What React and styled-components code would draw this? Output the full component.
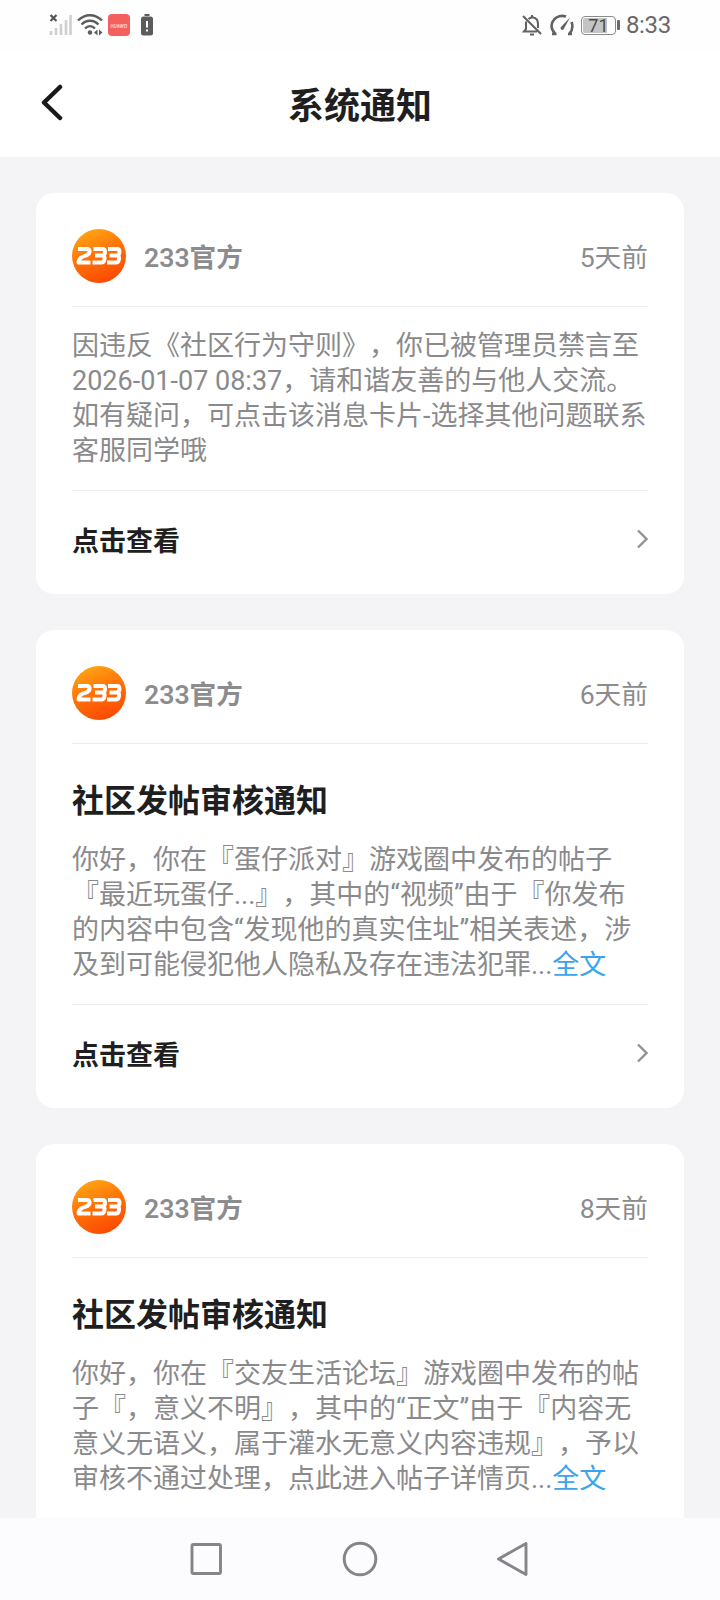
import React from 'react';
import styled, { createGlobalStyle } from 'styled-components';

const GlobalStyle = createGlobalStyle`
  * { box-sizing: border-box; }
  body {
    margin: 0;
    background: #f4f4f7;
    font-family: Roboto, "Noto Sans CJK SC", sans-serif;
    text-spacing-trim: space-all;
  }
`;

const Screen = styled.div`
  width: 720px;
  height: 1600px;
  display: flex;
  flex-direction: column;
  overflow: hidden;
  background: #f4f4f7;
`;

const StatusBar = styled.div`
  height: 50px;
  flex: none;
  display: flex;
  justify-content: space-between;
  align-items: center;
  padding: 0 49px 0 48px;
  background: #fefefe;
`;

const StatusGroup = styled.div`
  display: flex;
  align-items: center;
  height: 50px;
`;

const Clock = styled.span`
  margin-left: 6px;
  font-size: 24px;
  line-height: 50px;
  letter-spacing: -0.3px;
  color: #686868;
`;

const BatteryShell = styled.div`
  width: 35px;
  height: 19px;
  margin-left: 7px;
  border: 1.5px solid #8a8a8a;
  border-radius: 4px;
  padding: 1px;
  background: linear-gradient(90deg, #c4c4c4 0 24px, #fff 24px) content-box;
  color: #4c4c4c;
  font-size: 18px;
  line-height: 15px;
  text-align: center;
`;

const BatteryTip = styled.span`
  width: 3px;
  height: 10px;
  margin-left: 1px;
  border-radius: 1px;
  background: #6b6b6b;
`;

const AppBadge = styled.div`
  width: 22px;
  height: 22px;
  margin-left: 5px;
  border-radius: 4px;
  background: #f4605d;
  color: #ffd0c8;
  font-size: 4.5px;
  font-weight: 700;
  line-height: 25px;
  text-align: center;
`;

const TitleBar = styled.header`
  height: 107px;
  flex: none;
  display: grid;
  grid-template-columns: 120px 1fr 120px;
  align-items: center;
  background: #fff;
`;

const BackButton = styled.button`
  width: 24px;
  height: 38px;
  margin: 0 0 4px 40px;
  padding: 0;
  border: 0;
  background: none;
`;

const PageTitle = styled.h1`
  margin: 6px 0 0;
  text-align: center;
  font-size: 36px;
  line-height: 48px;
  font-weight: 700;
  color: #1f1f22;
`;

const Feed = styled.main`
  flex: 1;
  min-height: 0;
  overflow: hidden;
  display: flex;
  flex-direction: column;
  gap: 36px;
  padding: 36px 36px 0;
`;

const Card = styled.article`
  flex: none;
  padding: 0 36px;
  border-radius: ${(p) => (p.$open ? '18px 18px 0 0' : '18px')};
  background: #fff;
`;

const CardHeader = styled.div`
  height: 114px;
  display: flex;
  align-items: center;
  padding-top: 12px;
  border-bottom: 1px solid #ececee;
`;

const Sender = styled.span`
  flex: 1;
  margin: 4px 0 0 18px;
  font-size: 26.6px;
  line-height: 36px;
  font-weight: 600;
  color: #8c8c8e;
`;

const Age = styled.time`
  margin-top: 4px;
  font-size: 26.7px;
  line-height: 36px;
  color: #8c8c8e;
`;

const CardBody = styled.div`
  height: ${(p) => (p.$titled ? 261 : 184)}px;
  padding-top: ${(p) => (p.$titled ? 34 : 22)}px;
  border-bottom: ${(p) => (p.$open ? 'none' : '1px solid #ececee')};
`;

const CardTitle = styled.h2`
  margin: 0 0 19px;
  font-size: 32px;
  line-height: 46px;
  font-weight: 700;
  color: #1f1f22;
`;

const Message = styled.p`
  margin: 0;
  white-space: pre;
  font-size: 27px;
  line-height: 35.15px;
  color: #8a8a8c;
`;

const More = styled.a`
  color: #3ba4ec;
`;

const CardFooter = styled.div`
  height: 103px;
  display: flex;
  align-items: center;
  justify-content: space-between;
  padding-bottom: 2px;
  font-size: 27px;
  font-weight: 700;
  line-height: 36px;
  color: #1f1f22;
`;

const NavBar = styled.nav`
  height: 82px;
  flex: none;
  display: flex;
  justify-content: center;
  align-items: center;
  gap: 118px;
  background: #fcfbfd;
`;

const Avatar = () => (
  <svg width="54" height="54" viewBox="0 0 54 54">
    <defs>
      <linearGradient id="sun" x1="0.2" y1="0" x2="0.6" y2="1">
        <stop offset="0" stopColor="#ffa914" />
        <stop offset="0.5" stopColor="#ff7208" />
        <stop offset="1" stopColor="#fb4a03" />
      </linearGradient>
    </defs>
    <circle cx="27" cy="27" r="27" fill="url(#sun)" />
    <g fill="none" stroke="#fff" strokeWidth="4" strokeLinejoin="round" strokeLinecap="butt">
      <path d="M6 20H15.500Q18 20 17.500 23Q17 25.500 14 26.500L10 28Q7 29.500 6.500 33.500H18.500" />
      <path d="M21.500 20H30.500Q33 20 33 23Q33 26 30.500 26.500H23M30.500 26.500Q33 27 32.500 30Q32 33.500 29.500 33.500H20.500" />
      <path d="M36 20H45Q47.500 20 47.500 23Q47.500 26 45 26.500H37.500M45 26.500Q47.500 27 47 30Q46.500 33.500 44 33.500H35" />
    </g>
  </svg>
);

const SignalIcon = () => (
  <svg width="24" height="24" viewBox="0 0 24 24">
    <g stroke="#cfcfcf" strokeWidth="2.6">
      <path d="M3 22V18M8 22V15M13 22V11M18 22V7M22.500 22V2" />
    </g>
    <path d="M2.500 2L8.500 8M8.500 2L2.500 8" stroke="#565656" strokeWidth="2.200" />
  </svg>
);

const StatusIcon = styled.svg`
  flex: none;
  margin-left: ${(p) => p.$gap}px;
`;

const WifiIcon = () => (
  <StatusIcon $gap={5} width="26" height="24" viewBox="0 0 26 24" fill="none" stroke="#5c5c5c" strokeWidth="2.400">
    <path d="M1 7.500C8 .5 18 .5 25 7.500M4.500 11.500C9.500 6.500 16.500 6.500 21.500 11.500M8 15.500C11 12.500 15 12.500 18 15.500" />
    <circle cx="13" cy="19.500" r="2.200" fill="#5c5c5c" stroke="none" />
    <path d="M20.500 16.500V22.500L17 19.500ZM22 16.500V22.500L25.500 19.500Z" fill="#5c5c5c" stroke="none" />
  </StatusIcon>
);

const BatteryAlertIcon = () => (
  <StatusIcon $gap={11} width="12" height="22" viewBox="0 0 12 22">
    <rect x="3.500" y="0" width="5" height="2" fill="#5c5c5c" />
    <rect x="0" y="2.500" width="12" height="19" rx="2.500" fill="#5c5c5c" />
    <path d="M6 7V13.500M6 15.500V17.500" stroke="#fff" strokeWidth="2" />
  </StatusIcon>
);

const MuteIcon = () => (
  <StatusIcon $gap={0} width="20" height="22" viewBox="0 0 20 22" fill="none" stroke="#626262" strokeWidth="2.100">
    <path d="M1 2L19 20M6.500 5Q9 3 11.500 3.500Q16 4.500 16 10V14M4 7.500V15L2 17.500H15M8 20.500H12M10 1V3.500" />
  </StatusIcon>
);

const GaugeIcon = () => (
  <StatusIcon $gap={8} width="24" height="23" viewBox="0 0 24 23" fill="none" stroke="#626262" strokeWidth="2.600">
    <path d="M5 19.500Q1.500 16 1.500 12Q2 6.500 6.500 3.500Q11 .8 16 2.500M21.500 8Q24 14.500 19.500 19.500M2 20H6.500M18 20H22" />
    <path d="M20 3.500L13.500 15.500Q10.500 17 10.500 13.500Z" fill="#626262" stroke="none" />
  </StatusIcon>
);

const BackIcon = () => (
  <svg width="24" height="38" viewBox="0 0 24 38" fill="none" stroke="#19191b" strokeWidth="4.500" strokeLinecap="round" strokeLinejoin="round">
    <path d="M20 4L4 19.500L20 35" />
  </svg>
);

const Chevron = styled.svg`
  margin-bottom: 5px;
`;

const ChevronIcon = () => (
  <Chevron width="11" height="20" viewBox="0 0 11 20" fill="none" stroke="#929294" strokeWidth="2.400">
    <path d="M1 1.500L9.500 10L1 18.500" />
  </Chevron>
);

const NavIcon = ({ children }) => (
  <svg width="36" height="36" viewBox="0 0 36 36" fill="none" stroke="#868488" strokeWidth="2.900" strokeLinejoin="round">
    {children}
  </svg>
);

const notices = [
  {
    age: '5天前',
    text: '因违反《社区行为守则》，你已被管理员禁言至\n2026-01-07 08:37，请和谐友善的与他人交流。\n如有疑问，可点击该消息卡片-选择其他问题联系\n客服同学哦',
    action: '点击查看',
  },
  {
    age: '6天前',
    title: '社区发帖审核通知',
    text: '你好，你在『蛋仔派对』游戏圈中发布的帖子\n『最近玩蛋仔...』，其中的“视频”由于『你发布\n的内容中包含“发现他的真实住址”相关表述，涉\n及到可能侵犯他人隐私及存在违法犯罪...',
    more: true,
    action: '点击查看',
  },
  {
    age: '8天前',
    title: '社区发帖审核通知',
    text: '你好，你在『交友生活论坛』游戏圈中发布的帖\n子『，意义不明』，其中的“正文”由于『内容无\n意义无语义，属于灌水无意义内容违规』，予以\n审核不通过处理，点此进入帖子详情页...',
    more: true,
  },
];

const Notice = ({ age, title, text, more, action }) => (
  <Card $open={!action}>
    <CardHeader>
      <Avatar />
      <Sender>233官方</Sender>
      <Age>{age}</Age>
    </CardHeader>
    <CardBody $titled={Boolean(title)} $open={!action}>
      {title && <CardTitle>{title}</CardTitle>}
      <Message>
        {text}
        {more && <More>全文</More>}
      </Message>
    </CardBody>
    {action && (
      <CardFooter>
        {action}
        <ChevronIcon />
      </CardFooter>
    )}
  </Card>
);

export default function App() {
  return (
    <Screen lang="zh-CN">
      <GlobalStyle />
      <StatusBar>
        <StatusGroup>
          <SignalIcon />
          <WifiIcon />
          <AppBadge>HUAWEI</AppBadge>
          <BatteryAlertIcon />
        </StatusGroup>
        <StatusGroup>
          <MuteIcon />
          <GaugeIcon />
          <BatteryShell>71</BatteryShell>
          <BatteryTip />
          <Clock>8:33</Clock>
        </StatusGroup>
      </StatusBar>
      <TitleBar>
        <BackButton aria-label="返回">
          <BackIcon />
        </BackButton>
        <PageTitle>系统通知</PageTitle>
      </TitleBar>
      <Feed>
        {notices.map((n) => (
          <Notice key={n.age} {...n} />
        ))}
      </Feed>
      <NavBar>
        <NavIcon>
          <rect x="4" y="3.500" width="28.500" height="29" rx="1.500" />
        </NavIcon>
        <NavIcon>
          <circle cx="18" cy="18" r="15.800" />
        </NavIcon>
        <NavIcon>
          <path d="M30 2.500V33.500L2.500 18Z" />
        </NavIcon>
      </NavBar>
    </Screen>
  );
}
